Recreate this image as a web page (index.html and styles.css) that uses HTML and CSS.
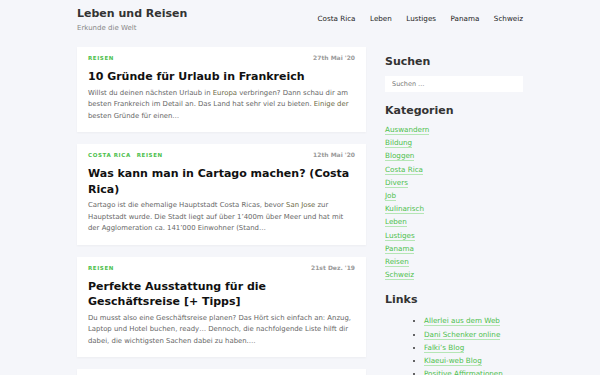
FILE: index.html
```html
<!DOCTYPE html>
<html lang="de">
<head>
    <meta charset="UTF-8">
    <meta name="viewport" content="width=device-width, initial-scale=1.0">
    <title>Leben und Reisen</title>
    <link rel="stylesheet" href="styles.css">
</head>
<body>
    <header class="site-header">
        <div class="branding">
            <a class="site-title" href="#">Leben und Reisen</a>
            <p class="site-description">Erkunde die Welt</p>
        </div>
        <nav class="main-nav">
            <a href="#">Costa Rica</a>
            <a href="#">Leben</a>
            <a href="#">Lustiges</a>
            <a href="#">Panama</a>
            <a href="#">Schweiz</a>
        </nav>
    </header>

    <div class="site-content">
        <main class="posts">
            <article class="post-card">
                <div class="post-meta">
                    <div class="post-cats"><a href="#">Reisen</a></div>
                    <span class="post-date">27th Mai '20</span>
                </div>
                <h2 class="post-title">10 Gründe für Urlaub in Frankreich</h2>
                <p class="post-excerpt">Willst du deinen nächsten Urlaub in <a href="#">Europa</a> verbringen? Dann schau dir am besten Frankreich im Detail an. Das Land hat sehr viel zu bieten. <a href="#">Einige der</a> besten Gründe für einen…</p>
            </article>

            <article class="post-card">
                <div class="post-meta">
                    <div class="post-cats"><a href="#">Costa Rica</a><a href="#">Reisen</a></div>
                    <span class="post-date">12th Mai '20</span>
                </div>
                <h2 class="post-title">Was kann man in Cartago machen? (Costa Rica)</h2>
                <p class="post-excerpt">Cartago ist die ehemalige Hauptstadt Costa Ricas, bevor <a href="#">San Jose</a> zur Hauptstadt wurde. Die Stadt liegt auf über 1’400m über Meer und hat mit der Agglomeration ca. 141’000 Einwohner (Stand…</p>
            </article>

            <article class="post-card">
                <div class="post-meta">
                    <div class="post-cats"><a href="#">Reisen</a></div>
                    <span class="post-date">21st Dez. '19</span>
                </div>
                <h2 class="post-title">Perfekte Ausstattung für die Geschäftsreise [+ Tipps]</h2>
                <p class="post-excerpt">Du musst also eine Geschäftsreise planen? Das Hört sich einfach an: Anzug, Laptop und Hotel buchen, ready… Dennoch, die nachfolgende Liste hilft dir dabei, die wichtigsten Sachen dabei zu haben.…</p>
            </article>

            <article class="post-card">
                <div class="post-meta">
                    <div class="post-cats"><a href="#">Leben</a></div>
                    <span class="post-date">2nd Dez. '19</span>
                </div>
                <h2 class="post-title">Weitere Beiträge</h2>
            </article>
        </main>

        <aside class="sidebar">
            <section class="widget">
                <h3 class="widget-title">Suchen</h3>
                <input class="search-field" type="search" placeholder="Suchen …">
            </section>

            <section class="widget">
                <h3 class="widget-title">Kategorien</h3>
                <ul class="cat-list">
                    <li><a href="#">Auswandern</a></li>
                    <li><a href="#">Bildung</a></li>
                    <li><a href="#">Bloggen</a></li>
                    <li><a href="#">Costa Rica</a></li>
                    <li><a href="#">Divers</a></li>
                    <li><a href="#">Job</a></li>
                    <li><a href="#">Kulinarisch</a></li>
                    <li><a href="#">Leben</a></li>
                    <li><a href="#">Lustiges</a></li>
                    <li><a href="#">Panama</a></li>
                    <li><a href="#">Reisen</a></li>
                    <li><a href="#">Schweiz</a></li>
                </ul>
            </section>

            <section class="widget">
                <h3 class="widget-title">Links</h3>
                <ul class="link-list">
                    <li><a href="#">Allerlei aus dem Web</a></li>
                    <li><a href="#">Dani Schenker online</a></li>
                    <li><a href="#">Falki’s Blog</a></li>
                    <li><a href="#">Klaeui-web Blog</a></li>
                    <li><a href="#">Positive Affirmationen</a></li>
                </ul>
            </section>
        </aside>
    </div>
</body>
</html>
```

FILE: styles.css
```css
body {
    margin: 0;
    padding: 0;
    background: #f5f6fa;
    font-family: "DejaVu Sans", Verdana, sans-serif;
    color: #333;
}

a {
    text-decoration: none;
    color: inherit;
}

.site-header {
    width: 446px;
    margin: 0 auto;
    display: flex;
    justify-content: space-between;
    align-items: flex-start;
    padding-top: 6px;
    height: 40px;
    box-sizing: border-box;
}

.site-title {
    display: block;
    font-size: 11px;
    font-weight: bold;
    color: #333;
    line-height: 16px;
}

.site-description {
    margin: 1px 0 0 0;
    font-size: 7px;
    line-height: 10px;
    color: #888;
}

.main-nav {
    display: flex;
    gap: 14.5px;
    padding-top: 8px;
    font-size: 7.2px;
}

.main-nav a {
    color: #222;
    line-height: 10px;
}

.site-content {
    width: 446px;
    margin: 0 auto;
    display: flex;
    gap: 19px;
    padding-top: 7px;
}

.posts {
    width: 289px;
    flex-shrink: 0;
    display: flex;
    flex-direction: column;
    gap: 12px;
}

.post-card {
    background: #fff;
    padding: 7px 11px 10px 11px;
    box-shadow: 0 1px 2px rgba(0, 0, 0, 0.04);
}

.post-meta {
    display: flex;
    justify-content: space-between;
    align-items: center;
    font-size: 6px;
    line-height: 8px;
}

.post-cats a {
    font-size: 5.5px;
    font-weight: bold;
    letter-spacing: 0.6px;
    text-transform: uppercase;
    color: #4cc04c;
    margin-right: 6px;
}

.post-date {
    font-weight: bold;
    color: #999;
}

.post-title {
    margin: 7px 0 3px 0;
    font-size: 11px;
    line-height: 15.5px;
    color: #111;
}

.post-excerpt {
    margin: 0;
    font-size: 6.9px;
    line-height: 11.5px;
    color: #666;
}

.post-excerpt a {
    color: #6c6a45;
}

.sidebar {
    width: 138px;
    flex-shrink: 0;
}

.widget {
    padding-top: 7px;
    margin-bottom: 4px;
}

.widget-title {
    margin: 0 0 4px 0;
    font-size: 11px;
    line-height: 16px;
    color: #333;
}

.search-field {
    display: block;
    width: 100%;
    height: 16px;
    margin-top: 6px;
    box-sizing: border-box;
    border: none;
    background: #fff;
    padding: 0 7px;
    font-family: inherit;
    font-size: 6.5px;
    outline: none;
}

.search-field::placeholder {
    color: #777;
}

.cat-list,
.link-list {
    margin: 0;
    font-size: 7.2px;
    line-height: 13.2px;
}

.cat-list {
    list-style: none;
    padding: 0;
}

.link-list {
    padding-left: 39px;
    padding-top: 2px;
}

.cat-list a,
.link-list a {
    color: #4cc04c;
    border-bottom: 1px solid #b5e6b5;
}
```
